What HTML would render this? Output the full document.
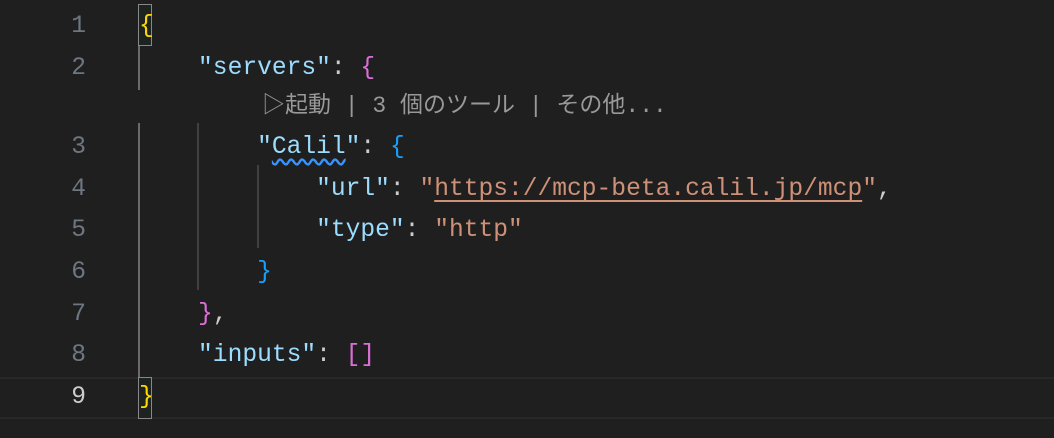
<!DOCTYPE html>
<html><head><meta charset="utf-8"><style>
body{margin:0;width:1054px;height:438px;background:#1f1f1f;overflow:hidden;position:relative;font-family:"Liberation Mono","Noto Sans CJK JP",monospace;font-size:24.6px;}
.row{position:absolute;left:0;height:41.5px;line-height:41.5px;width:1054px;white-space:pre;}
.ln{position:absolute;right:968px;color:#6e7681;text-align:right;}
.code{position:absolute;left:139px;color:#cccccc;}
.k{color:#9cdcfe}.s{color:#ce9178}.g{color:#ffd700}.p{color:#da70d6}.b{color:#179fff}
.guide{position:absolute;width:2px;background:#404040;}
.lens{position:absolute;left:262px;color:#999;font-size:23px;}
</style></head><body>
<div class="row" style="top:377px;border-top:2px solid #282828;border-bottom:2px solid #282828;box-sizing:border-box"></div>
<div class="guide" style="left:138px;top:46px;height:44px;background:#6a6a6a"></div>
<div class="guide" style="left:138px;top:123px;height:254px;background:#6a6a6a"></div>
<div class="guide" style="left:197px;top:123px;height:167px"></div>
<div class="guide" style="left:257px;top:165px;height:83px"></div>
<div style="position:absolute;left:138px;top:4px;width:12px;height:40px;border:1px solid #888;background:#1d2320"></div>
<div style="position:absolute;left:138px;top:377px;width:12px;height:40px;border:1px solid #888;background:#1d2320"></div>
<div class="row" style="top:6px"><span class="ln">1</span><span class="code"><span class="g">{</span></span></div>
<div class="row" style="top:48px"><span class="ln">2</span><span class="code">    <span class="k">"servers"</span>: <span class="p">{</span></span></div>
<div class="row" style="top:86px"><span class="lens">▷起動 | 3 個のツール | その他...</span></div>
<div class="row" style="top:127px"><span class="ln">3</span><span class="code">        <span class="k">"<span style="text-decoration:underline wavy #3794ff;text-underline-offset:5px">Calil</span>"</span>: <span class="b">{</span></span></div>
<div class="row" style="top:169px"><span class="ln">4</span><span class="code">            <span class="k">"url"</span>: <span class="s">"<span style="text-decoration:underline;text-underline-offset:5px">https://mcp-beta.calil.jp/mcp</span>"</span>,</span></div>
<div class="row" style="top:210px"><span class="ln">5</span><span class="code">            <span class="k">"type"</span>: <span class="s">"http"</span></span></div>
<div class="row" style="top:252px"><span class="ln">6</span><span class="code">        <span class="b">}</span></span></div>
<div class="row" style="top:294px"><span class="ln">7</span><span class="code">    <span class="p">}</span>,</span></div>
<div class="row" style="top:335px"><span class="ln">8</span><span class="code">    <span class="k">"inputs"</span>: <span class="p">[]</span></span></div>
<div class="row" style="top:377px"><span class="ln" style="color:#ccc">9</span><span class="code"><span class="g">}</span></span></div>
</body></html>
